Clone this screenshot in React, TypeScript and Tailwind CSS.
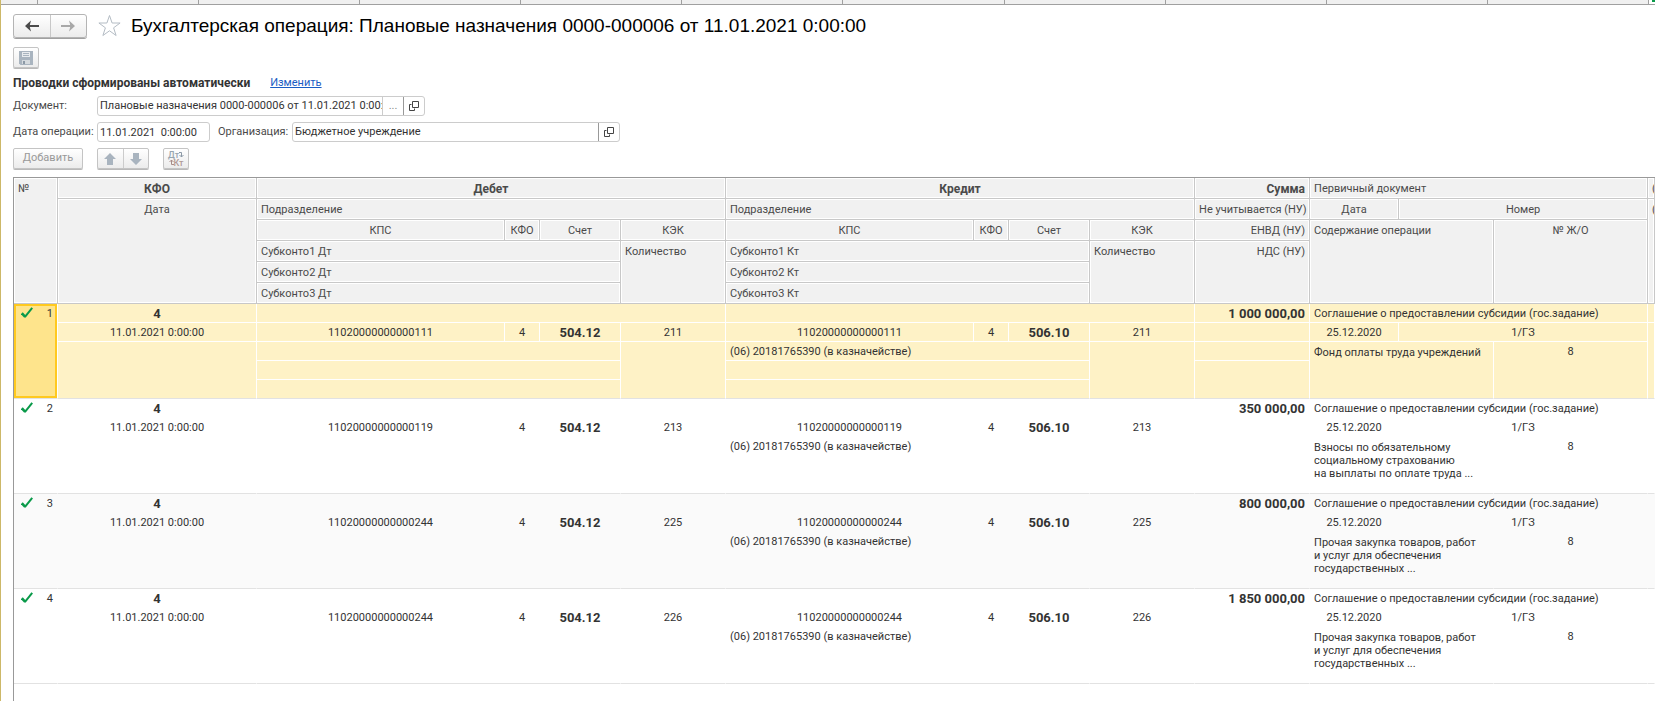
import { Fragment, type ReactNode } from "react";

const ENTRIES = [
  {
    amount: "1 000 000,00",
    kps: "11020000000000111",
    kek: "211",
    content: ["Фонд оплаты труда учреждений"],
  },
  {
    amount: "350 000,00",
    kps: "11020000000000119",
    kek: "213",
    content: ["Взносы по обязательному", "социальному страхованию", "на выплаты по оплате труда ..."],
  },
  {
    amount: "800 000,00",
    kps: "11020000000000244",
    kek: "225",
    content: ["Прочая закупка товаров, работ", "и услуг для обеспечения", "государственных ..."],
  },
  {
    amount: "1 850 000,00",
    kps: "11020000000000244",
    kek: "226",
    content: ["Прочая закупка товаров, работ", "и услуг для обеспечения", "государственных ..."],
  },
];

const TOOL_BUTTON =
  "flex items-center justify-center border border-[#c4c4c4] bg-gradient-to-b from-white to-[#ececec] shadow-[0_1px_0_#b9b9b9]";

function Th({
  children,
  span = 1,
  rows = 1,
  className = "text-center font-normal",
}: {
  children?: ReactNode;
  span?: number;
  rows?: number;
  className?: string;
}) {
  return (
    <th
      colSpan={span}
      rowSpan={rows}
      className={`overflow-hidden border-r border-b border-[#c8c8c8] bg-[#f1f1f1] px-1 pt-[2px] align-top leading-[18px] whitespace-nowrap shadow-[inset_0_0_0_1px_#fff] ${className}`}
    >
      {children}
    </th>
  );
}

function OpenIcon() {
  return (
    <svg width="10" height="10" viewBox="0 0 10 10" fill="none" stroke="#444" aria-hidden>
      <path d="M3.5.5h6v6h-6zM2.500 3.500h-2v6h5v-2" />
    </svg>
  );
}

function CheckIcon() {
  return (
    <svg width="12" height="12" viewBox="0 0 12 12" fill="none" stroke="#0a9a4a" aria-hidden>
      <path d="M.8 6.200 4.200 9.800" strokeWidth="2.600" />
      <path d="M3.800 10.200 11.200.8" strokeWidth="2" />
    </svg>
  );
}

function Entry({ entry, index }: { entry: (typeof ENTRIES)[number]; index: number }) {
  const selected = index === 0;
  const bg = selected ? "bg-[#fef2c6]" : index === 2 ? "bg-[#fafafa]" : "bg-white";
  const line = selected ? "border-white" : "border-transparent";
  const cell = `overflow-hidden border-r border-b px-1 pt-[2px] align-top leading-4 whitespace-nowrap ${bg} ${line}`;
  const last = `${cell} border-b-[#e2e2e2]`;

  return (
    <Fragment>
      <tr className="h-[19px]">
        <td
          rowSpan={5}
          className={`border-r border-b border-b-[#e2e2e2] px-1 pt-[2px] align-top leading-4 ${
            selected ? "border-r-white bg-[#fee48c] shadow-[inset_0_0_0_2px_#ffc91f]" : `border-r-transparent ${bg}`
          }`}
        >
          <div className="flex items-start justify-between pl-[3px]">
            <span className="pt-px">
              <CheckIcon />
            </span>
            {index + 1}
          </div>
        </td>
        <td className={`${cell} text-center text-[13px] font-bold`}>4</td>
        <td colSpan={4} className={cell} />
        <td colSpan={4} className={cell} />
        <td className={`${cell} text-right text-[13px] font-bold`}>{entry.amount}</td>
        <td colSpan={3} className={cell}>
          Соглашение о предоставлении субсидии (гос.задание)
        </td>
        <td className={cell} />
      </tr>
      <tr className="h-[19px]">
        <td className={`${cell} text-center`}>11.01.2021 0:00:00</td>
        {["504.12", "506.10"].map((account) => (
          <Fragment key={account}>
            <td className={`${cell} text-center`}>{entry.kps}</td>
            <td className={`${cell} text-center`}>4</td>
            <td className={`${cell} text-center text-[13px] font-bold`}>{account}</td>
            <td className={`${cell} text-center`}>{entry.kek}</td>
          </Fragment>
        ))}
        <td className={cell} />
        <td className={`${cell} text-center`}>25.12.2020</td>
        <td colSpan={2} className={`${cell} text-center`}>
          1/ГЗ
        </td>
        <td rowSpan={4} className={last} />
      </tr>
      <tr className="h-[19px]">
        <td rowSpan={3} className={last} />
        <td colSpan={3} className={cell} />
        <td rowSpan={3} className={last} />
        <td colSpan={3} className={cell}>
          (06) 20181765390 (в казначействе)
        </td>
        <td rowSpan={3} className={last} />
        <td className={cell} />
        <td colSpan={2} rowSpan={3} className={last}>
          <div className="pt-[2px] leading-[13px]">
            {entry.content.map((text) => (
              <div key={text}>{text}</div>
            ))}
          </div>
        </td>
        <td rowSpan={3} className={`${last} text-center`}>
          8
        </td>
      </tr>
      <tr className="h-[19px]">
        <td colSpan={3} className={cell} />
        <td colSpan={3} className={cell} />
        <td rowSpan={2} className={last} />
      </tr>
      <tr className="h-[19px]">
        <td colSpan={3} className={last} />
        <td colSpan={3} className={last} />
      </tr>
    </Fragment>
  );
}

function EntriesTable() {
  const left = "text-left font-normal";
  const right = "text-right font-normal";

  return (
    <table className="w-full table-fixed border-separate border-spacing-0 text-[#333]">
      <colgroup>
        <col className="w-[44px]" />
        <col className="w-[199px]" />
        <col className="w-[248px]" />
        <col className="w-[35px]" />
        <col className="w-[81px]" />
        <col className="w-[105px]" />
        <col className="w-[248px]" />
        <col className="w-[35px]" />
        <col className="w-[81px]" />
        <col className="w-[105px]" />
        <col className="w-[115px]" />
        <col className="w-[89px]" />
        <col className="w-[95px]" />
        <col className="w-[154px]" />
        <col />
      </colgroup>
      <thead className="text-[#4a4a4a]">
        <tr className="h-[21px]">
          <Th rows={6} className={left}>
            №
          </Th>
          <Th className="text-center text-[12px] font-bold">КФО</Th>
          <Th span={4} className="text-center text-[12px] font-bold">
            Дебет
          </Th>
          <Th span={4} className="text-center text-[12px] font-bold">
            Кредит
          </Th>
          <Th className="text-right text-[12px] font-bold">Сумма</Th>
          <Th span={3} className={left}>
            Первичный документ
          </Th>
          <Th className={left}>(</Th>
        </tr>
        <tr className="h-[21px]">
          <Th rows={5}>Дата</Th>
          <Th span={4} className={left}>
            Подразделение
          </Th>
          <Th span={4} className={left}>
            Подразделение
          </Th>
          <Th className={right}>Не учитывается (НУ)</Th>
          <Th>Дата</Th>
          <Th span={2}>Номер</Th>
          <Th rows={5} className={left}>
            (
          </Th>
        </tr>
        <tr className="h-[21px]">
          {["Дт", "Кт"].map((side) => (
            <Fragment key={side}>
              <Th>КПС</Th>
              <Th>КФО</Th>
              <Th>Счет</Th>
              <Th>КЭК</Th>
            </Fragment>
          ))}
          <Th className={right}>ЕНВД (НУ)</Th>
          <Th span={2} rows={4} className={left}>
            Содержание операции
          </Th>
          <Th rows={4}>№ Ж/О</Th>
        </tr>
        <tr className="h-[21px]">
          {["Дт", "Кт"].map((side) => (
            <Fragment key={side}>
              <Th span={3} className={left}>
                Субконто1 {side}
              </Th>
              <Th rows={3} className={left}>
                Количество
              </Th>
            </Fragment>
          ))}
          <Th rows={3} className={right}>
            НДС (НУ)
          </Th>
        </tr>
        {[2, 3].map((n) => (
          <tr key={n} className="h-[21px]">
            <Th span={3} className={left}>
              Субконто{n} Дт
            </Th>
            <Th span={3} className={left}>
              Субконто{n} Кт
            </Th>
          </tr>
        ))}
      </thead>
      <tbody>
        {ENTRIES.map((entry, i) => (
          <Entry key={i} entry={entry} index={i} />
        ))}
      </tbody>
    </table>
  );
}

export default function App() {
  return (
    <div className="flex min-h-screen flex-col overflow-hidden border-l border-[#cdb868] bg-white font-[Roboto,'Liberation_Sans',sans-serif] text-[11px] text-[#333]">
      <div className="flex h-[5px] shrink-0 border-b border-[#a0a0a0] bg-[#f0f0f0]">
        <div className="w-[37px] border-r border-[#a0a0a0]" />
        {Array.from({ length: 10 }, (_, i) => (
          <div key={i} className="flex-1 border-r border-[#a0a0a0]" />
        ))}
        <div className="flex w-[6px] justify-end bg-white">
          <div className="h-[2px] w-[3px] bg-[#0a9a4a]" />
        </div>
      </div>

      <header className="flex h-[42px] items-center pl-3">
        <div className="flex h-[24px] w-[74px] rounded-[3px] border border-[#b4b4b4] bg-gradient-to-b from-white to-[#ececec] shadow-[0_1px_0_#a0a0a0]">
          <button aria-label="Назад" className="flex flex-1 items-center justify-center border-r border-[#c8c8c8]">
            <svg width="14" height="12" viewBox="0 0 14 12" fill="#4a4a4a">
              <path d="M0 6 6 .5 4.800 5H14v2H4.800L6 11.500z" />
            </svg>
          </button>
          <button aria-label="Вперед" className="flex flex-1 items-center justify-center">
            <svg width="14" height="12" viewBox="0 0 14 12" fill="#a8a8a8">
              <path d="M14 6 8 .5 9.200 5H0v2h9.200L8 11.500z" />
            </svg>
          </button>
        </div>
        <button aria-label="В избранное" className="ml-[10px]">
          <svg width="24" height="24" viewBox="0 0 24 24" fill="none" stroke="#b4bcc4">
            <path d="M12.500 1.500l2.600 7.500h8l-6.500 4.800 2.500 7.700-6.600-4.700-6.600 4.700 2.500-7.700L1.900 9h8z" />
          </svg>
        </button>
        <h1 className="ml-[10px] font-['Liberation_Sans',sans-serif] text-[19px] whitespace-nowrap text-black">
          Бухгалтерская операция: Плановые назначения 0000-000006 от 11.01.2021 0:00:00
        </h1>
      </header>

      <div className="flex flex-col items-start pl-3">
        <button aria-label="Записать" className={`h-[21px] w-[26px] rounded-[2px] ${TOOL_BUTTON}`}>
          <svg width="14" height="14" viewBox="0 0 14 14" aria-hidden>
            <path d="M0 0h14v14H1.500L0 12.500z" fill="#a9b4bf" />
            <path d="M3 1h8v5H3z" fill="#e8ebee" />
            <path d="M4 2.500h6M4 4.500h6" stroke="#a9b4bf" />
            <path d="M3 9h8v4H3z" fill="#d5dade" />
            <path d="M4 10h2v3H4z" fill="#8c99a6" />
          </svg>
        </button>

        <div className="mt-[7px] flex h-[16px] items-center gap-5">
          <strong className="text-[12px]">Проводки сформированы автоматически</strong>
          <a href="#edit" className="text-[#1a5dc4] underline">
            Изменить
          </a>
        </div>

        <div className="mt-[5px] flex h-[20px] items-center">
          <label htmlFor="document" className="w-[84px] pt-px text-[#4a4a4a]">
            Документ:
          </label>
          <div className="flex h-[20px] w-[328px] rounded-[3px] border border-[#ccc]">
            <input
              id="document"
              readOnly
              defaultValue="Плановые назначения 0000-000006 от 11.01.2021 0:00:00"
              className="min-w-0 flex-1 pt-px pl-[2px] outline-none"
            />
            <button aria-label="Выбрать" className="w-[21px] border-l border-[#ccc] pt-px text-[#888]">
              ...
            </button>
            <button aria-label="Открыть документ" className="flex w-[21px] items-center justify-center border-l border-[#999]">
              <OpenIcon />
            </button>
          </div>
        </div>

        <div className="mt-[6px] flex h-[20px] items-center">
          <label htmlFor="date" className="w-[84px] pt-px whitespace-nowrap text-[#4a4a4a]">
            Дата операции:
          </label>
          <input
            id="date"
            readOnly
            defaultValue="11.01.2021  0:00:00"
            className="h-[20px] w-[113px] rounded-[3px] border border-[#ccc] pt-px pl-[2px] whitespace-pre outline-none"
          />
          <label htmlFor="organization" className="ml-[8px] w-[74px] pt-px text-[#4a4a4a]">
            Организация:
          </label>
          <div className="flex h-[20px] w-[328px] rounded-[3px] border border-[#ccc]">
            <input
              id="organization"
              readOnly
              defaultValue="Бюджетное учреждение"
              className="min-w-0 flex-1 pt-px pl-[2px] outline-none"
            />
            <button aria-label="Открыть организацию" className="flex w-[21px] items-center justify-center border-l border-[#999]">
              <OpenIcon />
            </button>
          </div>
        </div>

        <div className="mt-[6px] mb-[8px] flex h-[21px]">
          <button className={`w-[70px] rounded-[2px] text-[#999] ${TOOL_BUTTON}`}>Добавить</button>
          <div className={`ml-[14px] w-[52px] rounded-[2px] ${TOOL_BUTTON}`}>
            <button aria-label="Вверх" className="flex h-full flex-1 items-center justify-center border-r border-[#ccc]">
              <svg width="12" height="12" viewBox="0 0 12 12" fill="#a9b4bf">
                <path d="M6 0l6 6H9v6H3V6H0z" />
              </svg>
            </button>
            <button aria-label="Вниз" className="flex h-full flex-1 items-center justify-center">
              <svg width="12" height="12" viewBox="0 0 12 12" fill="#a9b4bf">
                <path d="M6 12l6-6H9V0H3v6H0z" />
              </svg>
            </button>
          </div>
          <button
            aria-label="Дт Кт"
            className={`ml-[14px] w-[26px] flex-col rounded-[2px] text-[9px] leading-[8px] font-medium ${TOOL_BUTTON}`}
          >
            <span className="flex items-center text-[#98a5af]">
              Дт
              <svg width="5" height="7" viewBox="0 0 5 7" fill="none" stroke="#8c99a6">
                <path d="M0 1.500h2.500V6M.5 4l2 2 2-2" />
              </svg>
            </span>
            <span className="flex items-center text-[#b09a96]">
              <svg width="5" height="7" viewBox="0 0 5 7" fill="none" stroke="#a88c88">
                <path d="M5 5.500H2.500V1M.5 3l2-2 2 2" />
              </svg>
              Кт
            </span>
          </button>
        </div>
      </div>

      <main className="ml-3 flex-1 border-t border-l border-[#999]">
        <EntriesTable />
      </main>
    </div>
  );
}
